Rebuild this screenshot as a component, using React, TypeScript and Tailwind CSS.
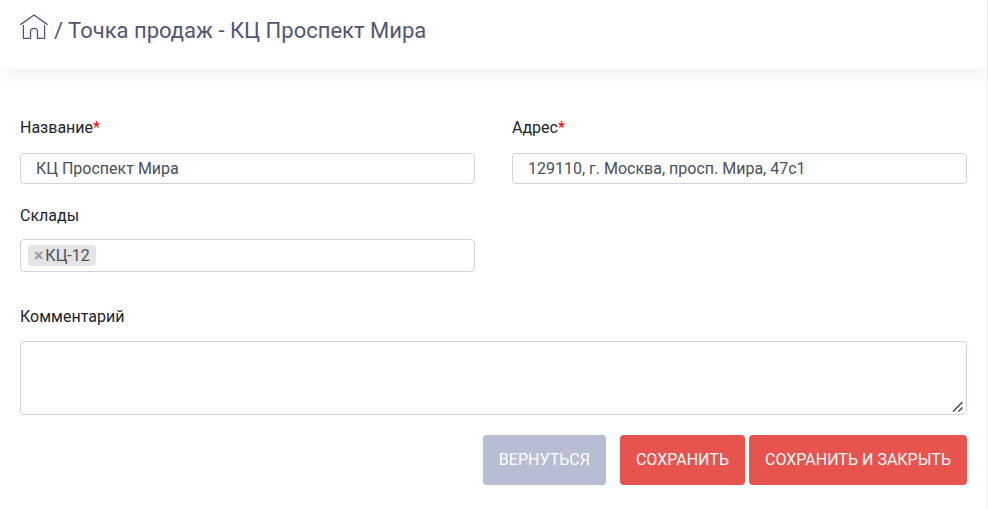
import { useState, type ReactNode } from "react";

const control =
  "block w-full rounded border border-[#ced4da] bg-white text-base text-[#495057] outline-none focus:border-[#8f9bb3]";

function Label({ htmlFor, required, children }: { htmlFor: string; required?: boolean; children: ReactNode }) {
  return (
    <label htmlFor={htmlFor} className="block text-base leading-6 text-[#212529]">
      {children}
      {required && <span className="text-[#ff0000]">*</span>}
    </label>
  );
}

function HomeIcon() {
  return (
    <svg width="28" height="26" viewBox="0 0 28 26" fill="none" stroke="currentColor" strokeWidth="1.3" strokeLinecap="round" strokeLinejoin="round">
      <path d="M0.8 10.4 14 1 27.2 10.4" />
      <path d="M3.4 11.5V24.4H10.5V17.8A3.5 3.5 0 0 1 17.5 17.8V24.4H24.6V11.5" />
    </svg>
  );
}

function ResizeGrip() {
  return (
    <svg className="pointer-events-none absolute right-1 bottom-[3px] text-[#444444]" width="11" height="11" viewBox="0 0 11 11" fill="none" stroke="currentColor" strokeWidth="1.5">
      <path d="M1 10.5 10.5 1M6.5 10.5 10.5 6.5" />
    </svg>
  );
}

export default function App() {
  const [stores, setStores] = useState(["КЦ-12"]);

  return (
    <div className="min-h-screen border-r border-[#eeeeee] bg-white font-['Roboto','Liberation_Sans',sans-serif]">
      <header className="flex h-[69px] items-start gap-[6px] px-5 pt-[14px] text-[#525576] shadow-[0_8px_15px_0_rgba(62,87,80,0.06)]">
        <a href="#" aria-label="Главная">
          <HomeIcon />
        </a>
        <h1 className="text-[22px] leading-[34px]">/ Точка продаж - КЦ Проспект Мира</h1>
      </header>

      <form className="px-5 pt-[47px] pb-6" onSubmit={(e) => e.preventDefault()}>
        <div className="grid grid-cols-2 gap-x-[37px] gap-y-5">
          <div className="flex flex-col gap-[13px]">
            <Label htmlFor="name" required>Название</Label>
            <input id="name" type="text" defaultValue="КЦ Проспект Мира" className={`${control} h-[31px] px-[15px]`} />
          </div>
          <div className="flex flex-col gap-[13px]">
            <Label htmlFor="address" required>Адрес</Label>
            <input id="address" type="text" defaultValue="129110, г. Москва, просп. Мира, 47с1" className={`${control} h-[31px] px-[15px]`} />
          </div>
          <div className="flex flex-col gap-[11px]">
            <Label htmlFor="stores">Склады</Label>
            <div className="flex h-[33px] items-center gap-1 rounded border border-[#ced4da] px-[7px]">
              {stores.map((s) => (
                <span key={s} className="flex h-[21px] items-center gap-[2px] rounded bg-[#e4e4e4] px-[6px] text-base text-[#495057]">
                  <button
                    type="button"
                    aria-label={`Удалить ${s}`}
                    className="font-['Liberation_Sans',sans-serif] font-bold text-[#999999]"
                    onClick={() => setStores(stores.filter((x) => x !== s))}
                  >
                    ×
                  </button>
                  {s}
                </span>
              ))}
              <input id="stores" type="text" className="min-w-0 flex-1 bg-transparent text-base outline-none" />
            </div>
          </div>
        </div>

        <div className="mt-[33px] flex flex-col gap-3">
          <Label htmlFor="comment">Комментарий</Label>
          <div className="relative">
            <textarea id="comment" className={`${control} h-[74px] resize-y px-[15px] py-1 [&::-webkit-resizer]:hidden`} />
            <ResizeGrip />
          </div>
        </div>

        <div className="mt-5 flex justify-end gap-1 text-base text-white">
          <button type="button" className="mr-[10px] h-[50px] rounded bg-[#b7bdd2] px-4">ВЕРНУТЬСЯ</button>
          <button type="submit" className="h-[50px] rounded bg-[#e7534d] px-4">СОХРАНИТЬ</button>
          <button type="submit" className="h-[50px] rounded bg-[#e7534d] px-4">СОХРАНИТЬ И ЗАКРЫТЬ</button>
        </div>
      </form>
    </div>
  );
}
